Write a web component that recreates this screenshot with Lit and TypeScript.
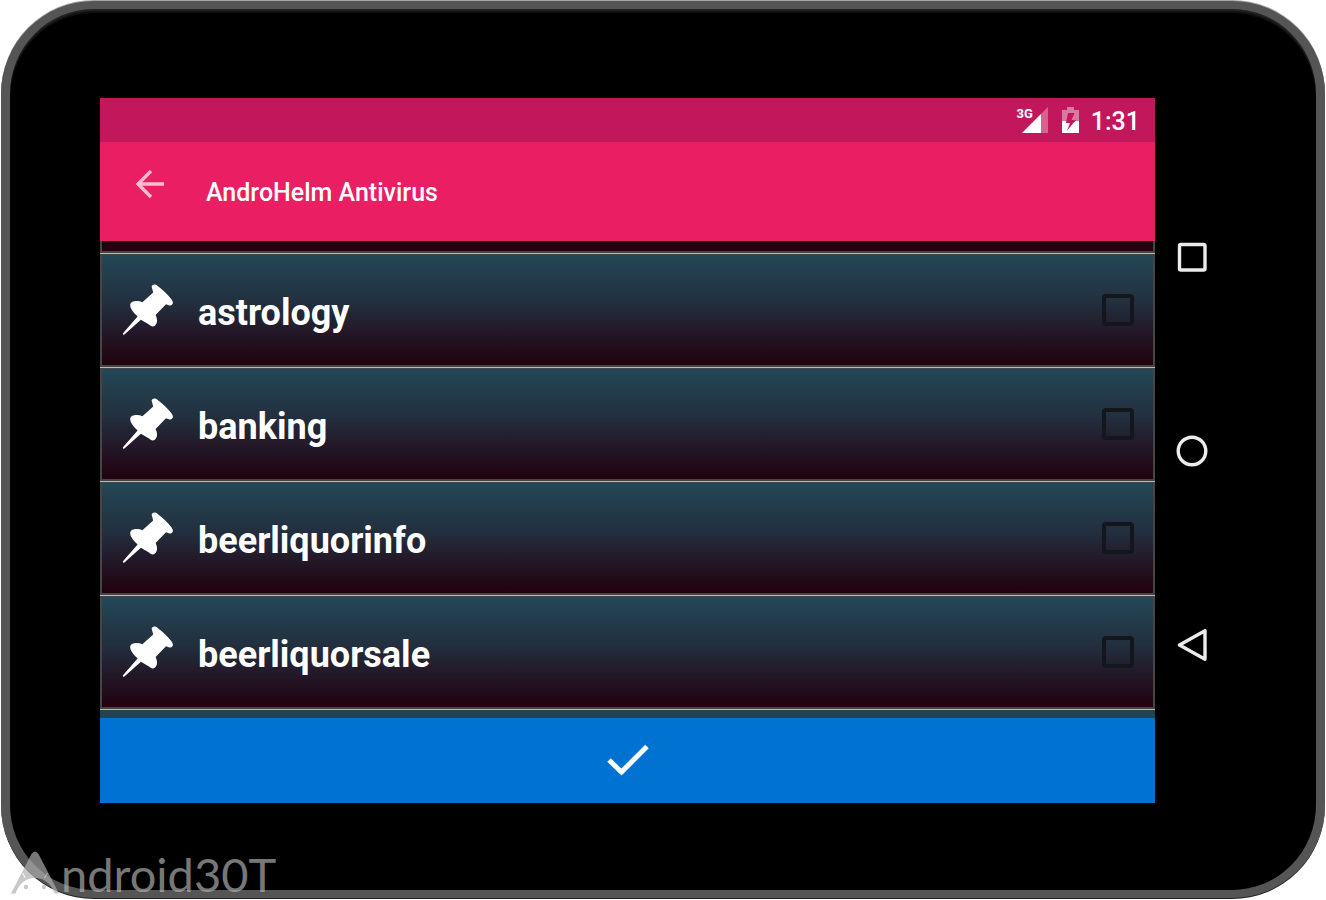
import { LitElement, html, css, svg } from "lit";
import { customElement, state } from "lit/decorators.js";

const pin = svg`<path d="M29.6 2.6C30.6-.2 33.800-.2 36 2.200C41 5.800 46 10.600 49.600 15.600C52 18.600 51 22 47.400 21.400L44 20.300L33.600 31C35.600 35 35.600 39 33 41.600C31.400 43.200 29 42.600 27.400 40.800L18.900 35.800L2.400 50.400C1.400 51.400.200 50.200 1.200 49L15.600 32.400C11.600 28.600 8 24.600 8.200 20.600C9 16.200 16.200 16.200 20.400 18.200L31.200 8.600Z"/>`;

@customElement("blocked-category")
export class BlockedCategory extends LitElement {
  static properties = { name: {} };
  declare name: string;

  static styles = css`
    :host {
      display: block;
      border: 2px solid #454545;
      border-top-width: 1px;
      background: linear-gradient(#244757 0%, #222f3e 44%, #231828 70%, #22030f 98%);
    }
    .row {
      display: flex;
      align-items: center;
      height: 110px;
      padding: 0 19px 0 20px;
      gap: 24px;
      color: #fff;
    }
    .pin {
      flex: none;
      width: 52px;
      height: 52px;
      fill: #fff;
    }
    .name {
      flex: 1;
      padding-top: 6px;
      font: bold 36px/44px Roboto, sans-serif;
    }
    .tick {
      appearance: none;
      flex: none;
      width: 32px;
      height: 32px;
      margin: 0;
      border: 4px solid #14161d;
      border-radius: 4px;
    }
    .tick:checked {
      background: #ea1e63;
    }
  `;

  render() {
    return html`<label class="row">
      <svg class="pin" viewBox="0 0 52 52" aria-hidden="true">${pin}</svg>
      <span class="name">${this.name}</span>
      <input class="tick" type="checkbox" />
    </label>`;
  }
}

@customElement("app-root")
export class AppRoot extends LitElement {
  @state() categories = ["astrology", "banking", "beerliquorinfo", "beerliquorsale"];

  static styles = css`
    :host {
      display: block;
      position: relative;
      background: #fff;
      font-family: Roboto, sans-serif;
    }
    .stage {
      box-sizing: border-box;
      display: flex;
      min-height: 100vh;
      padding: 1px 1px 2px;
    }
    .device {
      flex: 1;
      display: flex;
      padding: 89px 87px 87px 90px;
      border: 8px solid #555;
      border-width: 8px 9px;
      border-radius: 93px;
      background: #000;
      box-shadow: inset 0 2px 1px #222, inset 0 4px 1px #111, 0 -1px 0 #a4a6a5, 0 1px 0 #222;
    }
    .screen {
      flex: 1;
      min-width: 0;
      display: flex;
      flex-direction: column;
    }
    .status {
      display: flex;
      align-items: center;
      justify-content: flex-end;
      height: 44px;
      padding-right: 15px;
      background: #c2185b;
      color: #fff;
    }
    .network {
      display: flex;
      align-items: flex-start;
      margin-right: 14px;
    }
    .gen {
      margin-right: -11px;
      font: bold 13px/14px Roboto, sans-serif;
    }
    .battery {
      margin-right: 12px;
    }
    .time {
      padding-top: 4px;
      font: 500 25px/30px Roboto, sans-serif;
    }
    .toolbar {
      display: flex;
      align-items: center;
      height: 99px;
      padding-left: 34px;
      gap: 40px;
      background: #ea1e63;
      color: #fff;
    }
    button {
      display: block;
      border: 0;
      padding: 0;
      background: none;
      color: inherit;
      cursor: pointer;
    }
    svg {
      display: block;
    }
    .back {
      padding-bottom: 16px;
    }
    .title {
      margin: 0;
      padding-top: 2px;
      font: 500 25px/30px Roboto, sans-serif;
    }
    .list {
      flex: 1;
      min-height: 0;
      margin: 0;
      padding: 0;
      list-style: none;
      overflow: hidden;
      background: #24424f;
    }
    .item {
      border-bottom: 1px solid #bcb9b5;
    }
    .above {
      box-sizing: border-box;
      height: 12px;
      border: 2px solid #454545;
      border-top: 0;
      background: linear-gradient(#17040c, #22030f 4px);
    }
    .confirm {
      display: flex;
      align-items: center;
      justify-content: center;
      width: 100%;
      height: 85px;
      padding-bottom: 2px;
      background: #0072d2;
      color: #fff;
    }
    .keys {
      display: flex;
      flex-direction: column;
      align-items: center;
      justify-content: center;
      gap: 162px;
      width: 74px;
      padding-top: 1px;
      color: #ececec;
    }
    .watermark {
      position: absolute;
      left: 10px;
      bottom: 0;
      display: flex;
      align-items: flex-end;
      color: #b0b0b0;
      opacity: 0.68;
      pointer-events: none;
    }
    .brand {
      margin-left: 1px;
      font: 47px/52px Lato, sans-serif;
    }
  `;

  render() {
    return html`
      <div class="stage">
        <div class="device">
          <main class="screen">
            <div class="status">
              <span class="network">
                <span class="gen">3G</span>
                <svg width="26" height="26" viewBox="0 0 26 26" aria-hidden="true">
                  <path d="M26 0V26H0Z" fill="#fff" fill-opacity=".32" />
                  <path d="M19 7V26H0Z" fill="#fff" />
                </svg>
              </span>
              <svg class="battery" width="17" height="26" viewBox="0 0 17 26" aria-hidden="true">
                <path d="M5 0h7v3h5v23H0V3h5Z" fill="#fff" fill-opacity=".42" />
                <path d="M0 14h17v12H0Z" fill="#fff" />
                <path d="M12.500 6H6L4 16H8L5 23.500L14 13H9.500Z" fill="#c2185b" />
              </svg>
              <span class="time">1:31</span>
            </div>
            <header class="toolbar">
              <button class="back" aria-label="Back">
                <svg width="32" height="32" viewBox="0 0 32 32" fill="none" stroke="#fff" stroke-opacity=".7" stroke-width="3.400">
                  <path d="M30 16H4M17 3L4 16L17 29" />
                </svg>
              </button>
              <h1 class="title">AndroHelm Antivirus</h1>
            </header>
            <ul class="list">
              <li class="item" role="presentation"><div class="above"></div></li>
              ${this.categories.map(
                (c) => html`<li class="item"><blocked-category .name=${c}></blocked-category></li>`
              )}
            </ul>
            <button class="confirm" aria-label="Confirm">
              <svg width="44" height="34" viewBox="0 0 44 34" fill="none" stroke="currentColor" stroke-width="5">
                <path d="M3 17L15.500 29L41 3.500" />
              </svg>
            </button>
          </main>
          <nav class="keys">
            <button aria-label="Recent apps">
              <svg width="32" height="32" viewBox="0 0 32 32" fill="none" stroke="currentColor" stroke-width="3.400">
                <rect x="3.500" y="3.500" width="25.500" height="25.500" rx="1.500" />
              </svg>
            </button>
            <button aria-label="Home">
              <svg width="32" height="32" viewBox="0 0 32 32" fill="none" stroke="currentColor" stroke-width="3.400">
                <circle cx="16" cy="16" r="13.800" />
              </svg>
            </button>
            <button aria-label="Go back">
              <svg width="32" height="32" viewBox="0 0 32 32" fill="none" stroke="currentColor" stroke-width="3.400" stroke-linejoin="round">
                <path d="M3.500 16L29 1.700V30.300Z" />
              </svg>
            </button>
          </nav>
        </div>
      </div>
      <div class="watermark">
        <svg width="50" height="50" viewBox="0 0 50 50" fill="currentColor" aria-hidden="true">
          <path d="M1 43.500L21.500 4Q25 -1 28.500 4L49 43.500H44.500Q39 28 25 28Q11 28 5.500 43.500Z" />
          <circle cx="16" cy="37" r="2.200" />
          <circle cx="34" cy="37" r="2.200" />
          <path d="M12.500 23L15.500 28M37.500 23L34.500 28" stroke="#fff" stroke-width="1" />
        </svg>
        <span class="brand">ndroid30T</span>
      </div>
    `;
  }
}
